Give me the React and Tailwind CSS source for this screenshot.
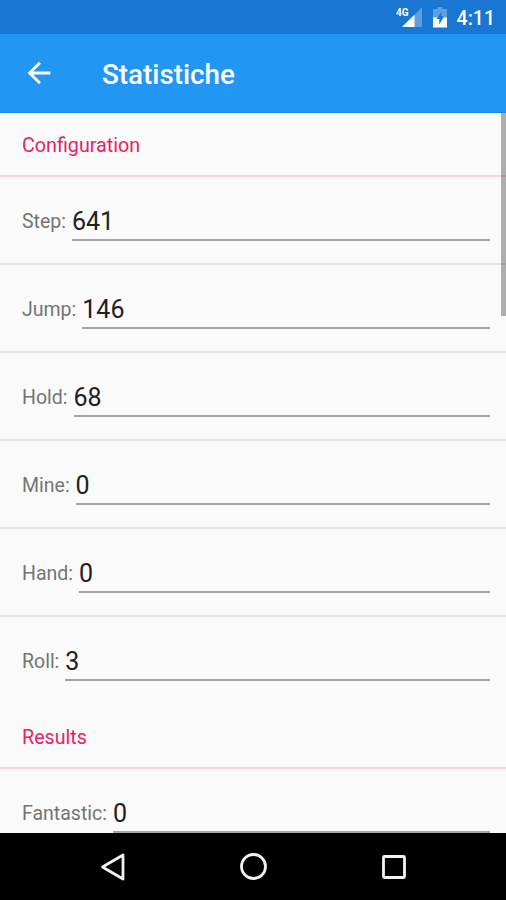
const SECTIONS = [
  {
    title: 'Configuration',
    fields: [
      { label: 'Step:', value: '641' },
      { label: 'Jump:', value: '146' },
      { label: 'Hold:', value: '68' },
      { label: 'Mine:', value: '0' },
      { label: 'Hand:', value: '0' },
      { label: 'Roll:', value: '3', last: true },
    ],
  },
  {
    title: 'Results',
    fields: [{ label: 'Fantastic:', value: '0', last: true }],
  },
];

function StatusBar() {
  return (
    <div className="flex h-[34px] shrink-0 items-center justify-end bg-[#1976d2] pr-[11px] text-white">
      <svg className="h-[24px] w-[28px]" viewBox="0 0 28 24" fill="none">
        <path d="M27 2.500V22H7Z" fill="#fff" fillOpacity="0.3" />
        <path d="M19.500 9.800V22H7Z" fill="#fff" />
        <text
          x="1"
          y="11"
          fill="#fff"
          fontSize="11.500"
          fontWeight="700"
          fontFamily="Roboto, sans-serif"
          textLength="12.500"
          lengthAdjust="spacingAndGlyphs"
        >
          4G
        </text>
      </svg>
      <svg className="ml-[10px] h-[22px] w-[14px]" viewBox="0 0 14 22">
        <path d="M4.500 1h5v2H14v9H0V3h4.500Z" fill="#fff" fillOpacity="0.3" />
        <path d="M0 11.500h14V21.500H0Z" fill="#fff" />
        <path d="M8.500 5.500 3.500 13H6.300v5.500L11 10.500H8.500Z" fill="#1976d2" />
      </svg>
      <span className="mt-[3px] ml-[10px] text-[19.5px] leading-none font-medium">4:11</span>
    </div>
  );
}

function AppBar() {
  return (
    <header className="flex h-[79px] shrink-0 items-center border-b border-[#1487e8] bg-[#2196f3] pl-[22px] text-white">
      <svg className="h-[34px] w-[34px]" viewBox="0 0 24 24" fill="currentColor">
        <path d="M20 11H7.830l5.590-5.590L12 4l-8 8 8 8 1.410-1.410L7.830 13H20v-2z" />
      </svg>
      <h1 className="mt-[4px] ml-[46px] text-[27.8px] leading-none font-medium">Statistiche</h1>
    </header>
  );
}

function Field({ label, value, last }) {
  return (
    <div className={`flex h-[88px] pr-[16px] pl-[22px] ${last ? '' : 'border-b-2 border-[#e4e4e4]'}`}>
      <span className="pt-[33px] text-[19.5px] leading-[24px] text-[#757575]">{label}</span>
      <span className="mt-[29px] ml-[6px] h-[35px] flex-1 border-b-2 border-[#a6a6a6] text-[25px] leading-[32px] text-[#212121]">
        {value}
      </span>
    </div>
  );
}

function Section({ title, fields }) {
  return (
    <section>
      <h2 className="h-[64px] border-b-2 border-[#fad3df] pt-[20px] pl-[22px] text-[19.7px] leading-[26px] text-[#e91e63]">
        {title}
      </h2>
      {fields.map((field) => (
        <Field key={field.label} {...field} />
      ))}
    </section>
  );
}

function NavBar() {
  return (
    <nav className="flex h-[67px] shrink-0 items-center justify-center gap-[112px] bg-black text-[#f2f2f2]">
      <svg className="h-[28px] w-[28px]" viewBox="0 0 28 28" fill="none" stroke="currentColor" strokeWidth="2.800">
        <path d="M24 2V26L3.500 14Z" strokeLinejoin="round" />
      </svg>
      <svg className="h-[28px] w-[28px]" viewBox="0 0 28 28" fill="none" stroke="currentColor" strokeWidth="2.800">
        <circle cx="14.500" cy="13.500" r="12" />
      </svg>
      <svg className="h-[28px] w-[28px]" viewBox="0 0 28 28" fill="none" stroke="currentColor" strokeWidth="2.800">
        <rect x="4.500" y="3.500" width="21" height="21" rx="1" />
      </svg>
    </nav>
  );
}

export default function App() {
  return (
    <div className="flex h-[900px] w-[506px] flex-col overflow-hidden bg-[#fafafa] font-['Roboto',sans-serif]">
      <StatusBar />
      <AppBar />
      <main className="relative min-h-0 flex-1 overflow-hidden">
        {SECTIONS.map((section) => (
          <Section key={section.title} {...section} />
        ))}
        {/* scroll thumb */}
        <div className="absolute top-0 right-0 h-[203px] w-[5px] bg-black/30" />
      </main>
      <NavBar />
    </div>
  );
}
